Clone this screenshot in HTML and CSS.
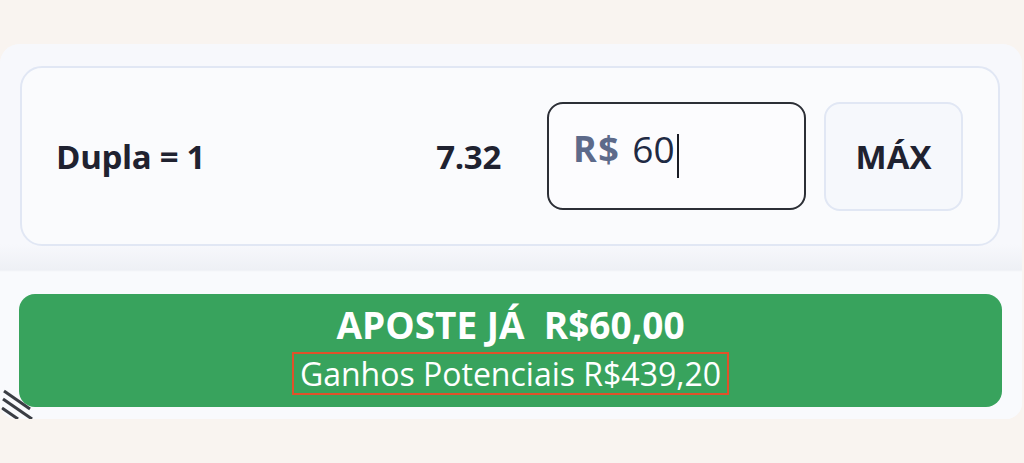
FILE: index.html
```html
<!DOCTYPE html>
<html lang="pt">
<head>
    <meta charset="UTF-8">
    <title>Cupom</title>
    <link rel="stylesheet" href="styles.css">
</head>
<body>
    <div class="slip">
        <div class="slip-top">
            <div class="stake-card">
                <span class="bet-type">Dupla = 1</span>
                <span class="odds">7.32</span>
                <div class="stake-input">
                    <span class="currency">R$</span>
                    <span class="amount">60</span><span class="caret"></span>
                </div>
                <button class="max-btn">MÁX</button>
            </div>
        </div>
        <div class="slip-bottom">
            <button class="place-btn">
                <span class="place-title">APOSTE JÁ&nbsp; R$60,00</span>
                <span class="place-sub">Ganhos Potenciais R$439,20</span>
            </button>
            <svg class="grip" width="40" height="34" viewBox="0 0 40 34">
                <line x1="4" y1="6" x2="30" y2="24" />
                <line x1="3" y1="14" x2="32" y2="34" />
                <line x1="2" y1="23" x2="18" y2="34" />
            </svg>
        </div>
    </div>
</body>
</html>
```

FILE: styles.css
```css
*{
    margin: 0;
    padding: 0;
    box-sizing: border-box;
}
body{
    background: #f9f4f0;
    font-family: "Open Sans", "Noto Sans", sans-serif;
    color: #1f2230;
}
.slip{
    margin-top: 44px;
    width: 1022px;
    height: 375px;
    background: #f7f8fc;
    border-radius: 20px 20px 16px 16px;
    overflow: hidden;
}
.slip-top{
    padding: 22px 22px 0 20px;
    height: 228px;
    background: linear-gradient(#f7f8fc 0, #f7f8fc 200px, #eef0f5 226px, #fafbfd 228px);
}
.stake-card{
    display: flex;
    align-items: center;
    height: 180px;
    width: 980px;
    padding: 0 35px 0 34px;
    background: #fafbfd;
    border: 2px solid #e1e7f4;
    border-radius: 22px;
}
.bet-type{
    flex: 1;
    font-size: 33px;
    font-weight: 700;
    letter-spacing: -0.3px;
}
.odds{
    font-size: 33px;
    font-weight: 700;
    letter-spacing: -0.3px;
}
.stake-input{
    display: flex;
    align-items: center;
    width: 259px;
    height: 108px;
    margin-left: 46px;
    padding-left: 24px;
    background: #fcfcfe;
    border: 2px solid #2c2f36;
    border-radius: 16px;
}
.currency{
    margin-bottom: 16px;
    margin-right: 12px;
    font-size: 36px;
    font-weight: 700;
    color: #5d6a8a;
    letter-spacing: 1.5px;
}
.amount{
    margin-bottom: 16px;
    font-size: 37px;
    color: #1f2a44;
}
.caret{
    width: 2px;
    height: 44px;
    background: #1a1d26;
    margin-left: 2px;
}
.max-btn{
    width: 139px;
    height: 109px;
    margin-left: 18px;
    background: #f6f8fc;
    border: 2px solid #e1e7f4;
    border-radius: 16px;
    font-family: inherit;
    font-size: 33px;
    font-weight: 700;
    color: #1f2230;
}
.slip-bottom{
    position: relative;
    padding: 22px 20px 0 19px;
    height: 147px;
    background: #f9fafd;
}
.place-btn{
    display: flex;
    flex-direction: column;
    align-items: center;
    justify-content: center;
    width: 983px;
    height: 113px;
    padding-bottom: 1px;
    background: #38a35d;
    border: none;
    border-radius: 16px;
    color: #ffffff;
    font-family: inherit;
}
.place-title{
    font-size: 37px;
    font-weight: 700;
    line-height: 40px;
}
.place-sub{
    margin-top: 7px;
    font-size: 32px;
    line-height: 39px;
    padding: 0 6px;
    border: 2px solid #e0522a;
}
.grip{
    position: absolute;
    left: 0;
    bottom: 0;
    stroke: #3a3d44;
    stroke-width: 3;
}
```
